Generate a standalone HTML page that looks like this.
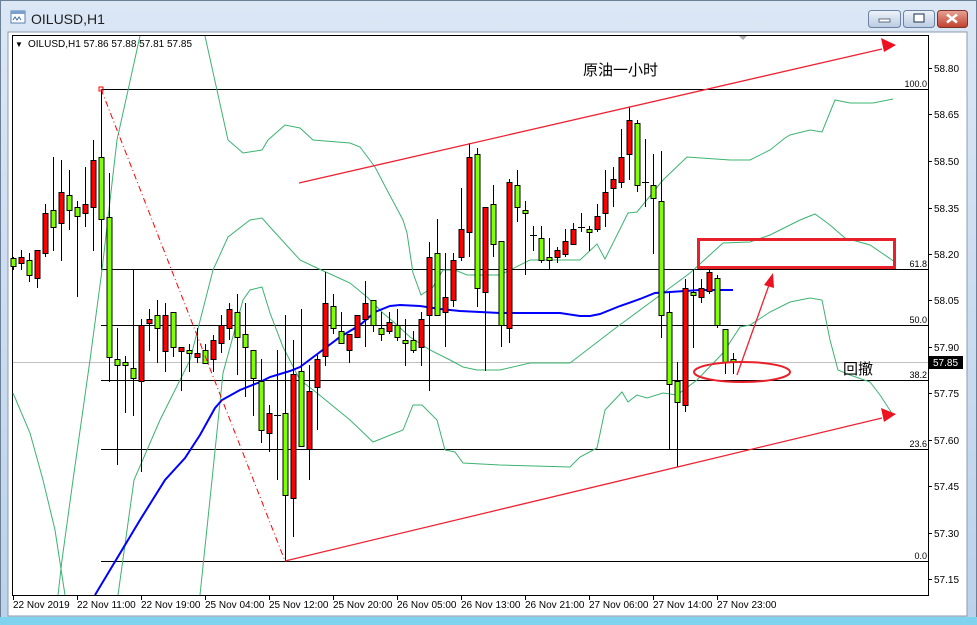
<!DOCTYPE html>
<html><head><meta charset="utf-8">
<style>
html,body{margin:0;padding:0;width:977px;height:625px;overflow:hidden;background:#c4d8ee;}
svg{display:block;font-family:"Liberation Sans","Noto Sans CJK SC",sans-serif;}
</style></head><body>
<svg width="977" height="625" viewBox="0 0 977 625" xmlns="http://www.w3.org/2000/svg">
<defs>
<linearGradient id="tb" x1="0" y1="0" x2="0" y2="1"><stop offset="0" stop-color="#dbe7f5"/><stop offset="1" stop-color="#bcd2ea"/></linearGradient>
<linearGradient id="bt" x1="0" y1="0" x2="0" y2="1"><stop offset="0" stop-color="#eef3fa"/><stop offset="1" stop-color="#b9cbe2"/></linearGradient>
<linearGradient id="cl" x1="0" y1="0" x2="0" y2="1"><stop offset="0" stop-color="#e8a395"/><stop offset="1" stop-color="#c0402c"/></linearGradient>
</defs>
<rect x="0" y="0" width="977" height="625" fill="url(#tb)"/>
<rect x="0.5" y="0.5" width="976" height="624" fill="none" stroke="#6b7f96"/>
<rect x="0" y="617" width="977" height="8" fill="#7fd3ee"/>
<!-- title -->
<rect x="11" y="11" width="14" height="12" fill="#fff" stroke="#5a7fb0"/>
<rect x="11" y="11" width="14" height="3" fill="#7aa0d0"/>
<path d="M13 20 l2-3 2 3 2-3 2 3" stroke="#3a6ab0" fill="none"/>
<text x="31" y="24" font-size="14" fill="#1e1e1e">OILUSD,H1</text>
<!-- buttons -->
<rect x="868.5" y="10.5" width="32" height="17" rx="3" fill="url(#bt)" stroke="#6b82a3"/>
<rect x="879" y="19" width="11" height="3" fill="#fff" stroke="#3f4f66" stroke-width="0.8"/>
<rect x="903.5" y="10.5" width="31" height="17" rx="3" fill="url(#bt)" stroke="#6b82a3"/>
<rect x="914" y="14" width="10" height="8" fill="#fff" stroke="#3f4f66" stroke-width="1.2"/>
<rect x="937.5" y="10.5" width="30" height="17" rx="3" fill="url(#cl)" stroke="#7a3328"/>
<path d="M947 14.5 l10 8 M957 14.5 l-10 8" stroke="#fff" stroke-width="2.5"/>
<!-- client -->
<rect x="8" y="32" width="959" height="584" fill="#fff" stroke="#8b9bb0"/>
<rect x="12.5" y="35.5" width="916" height="560" fill="#fff" stroke="#000"/>
<text x="15" y="47" font-size="8" fill="#000">▼</text>
<text x="28" y="47" font-size="10" fill="#000">OILUSD,H1  57.86 57.88 57.81 57.85</text>
<path d="M739 36 h8 l-4 4z" fill="#aaa"/>
<!-- current price line -->
<line x1="13" y1="362.5" x2="928" y2="362.5" stroke="#c0c0c0"/>
<!-- fib -->
<g stroke="#000" stroke-width="1">
<line x1="101" y1="89.5" x2="928" y2="89.5"/>
<line x1="101" y1="269.5" x2="928" y2="269.5"/>
<line x1="101" y1="325.5" x2="928" y2="325.5"/>
<line x1="101" y1="380.5" x2="928" y2="380.5"/>
<line x1="101" y1="449.5" x2="928" y2="449.5"/>
<line x1="101" y1="561.5" x2="928" y2="561.5"/>
<line x1="101.5" y1="89" x2="101.5" y2="269"/>
</g>
<g font-size="9" fill="#000" text-anchor="end">
<text x="927" y="87">100.0</text><text x="927" y="267">61.8</text><text x="927" y="323">50.0</text>
<text x="927" y="378">38.2</text><text x="927" y="447">23.6</text><text x="927" y="559">0.0</text>
</g>
<!-- bands -->
<g fill="none" stroke="#3cb371" stroke-width="1">
<polyline points="140,36 117,140 102,270 90,360 73,480 62,560 58,595"/>
<polyline points="205,36 228,140 243,153 262,150 268,140 285,125 300,128 313,140 350,143 360,147 375,167 387,190 403,220 407,233 413,273 421,295 433,287 443,270 455,270 467,275 500,275 530,260 580,260 597,244 605,259 628,213 637,212 663,180 687,157 730,160 750,160 770,150 785,138 790,135 810,130 822,132 835,100 850,103 873,103 893,99"/>
<polyline points="118,595 134,480 160,420 190,360 213,270 228,237 250,220 262,218 270,227 300,260 317,268 350,283 367,297 383,313 397,325 410,337 430,350 450,360 463,367 477,370 500,370 530,363 570,363 600,340 617,327 663,293 690,273 723,243 750,242 770,235 800,220 815,214 830,225 845,238 870,245 895,262"/>
<polyline points="13,393 30,433 43,480 55,530 65,595"/>
<polyline points="200,595 212,480 223,373 243,300 250,290 262,287 270,313 283,347 300,380 317,393 350,420 373,442 403,430 413,405 422,405 437,420 445,450 455,452 463,463 500,465 570,467 580,457 597,448 605,410 622,392 628,402 637,395 647,398 663,393 677,395 697,380 723,353 740,327 750,325 770,312 790,302 810,298 822,300 830,340 838,370 850,375 870,382 880,395 893,415"/>
</g>
<!-- MA -->
<polyline fill="none" stroke="#0000ff" stroke-width="2" points="95,595 110,570 140,520 165,480 185,458 200,435 215,408 222,400 240,390 260,382 270,377 290,371 300,367 320,352 340,337 360,325 375,312 390,306 400,305 420,306 440,309 460,311 500,313 540,313 560,313 580,316 590,316 600,314 620,306 640,299 655,293 670,292 700,290 733,290"/>
<!-- wicks -->
<path stroke="#000" stroke-width="1" fill="none" d="M13.5 257V270M21.5 250V270M29.5 253V282M37.5 250V288M45.5 204V257M53.5 157V251M61.5 160V261M69.5 170V230M77.5 201V297M85.5 167V227M93.5 140V251M101.5 150V230M109.5 173V382M117.5 328V465M125.5 356V413M133.5 269V416M141.5 319V472M149.5 309V351M157.5 300V363M165.5 303V372M173.5 312V357M181.5 347V391M189.5 344V372M197.5 328V363M205.5 344V363M213.5 335V372M221.5 315V353M229.5 303V340M237.5 294V375M245.5 303V397M253.5 350V416M261.5 359V443M269.5 405V452M277.5 350V480M285.5 315V561M293.5 340V537M301.5 309V446M309.5 365V480M317.5 355V430M325.5 272V366M333.5 294V334M341.5 312V343M349.5 334V363M357.5 315V337M365.5 281V347M373.5 300V332M381.5 312V341M389.5 312V334M397.5 309V341M405.5 319V366M413.5 331V353M421.5 312V366M429.5 242V391M437.5 219V315M445.5 253V347M453.5 253V307M461.5 188V261M469.5 143V257M477.5 148V307M485.5 207V371M493.5 185V257M501.5 241V347M509.5 179V343M517.5 170V222M525.5 201V275M533.5 226V251M541.5 226V263M549.5 238V269M557.5 247V263M565.5 229V257M573.5 223V244M581.5 213V232M589.5 226V251M597.5 204V232M605.5 170V227M613.5 167V207M621.5 129V188M629.5 107V180M637.5 120V192M645.5 139V207M653.5 154V254M661.5 151V338M669.5 292V449M677.5 362V467M685.5 279V412M693.5 269V348M701.5 279V303M709.5 269V294M717.5 275V328M725.5 329V374M733.5 353V374
M274 415.5h7M530 235.5h7M578 227.5h7M642 182.5h7"/>
<!-- bodies -->
<g stroke="#000" stroke-width="1">
<g fill="#7fff00">
<rect x="11" y="258.5" width="5" height="8"/><rect x="27" y="260.5" width="5" height="15"/><rect x="51" y="210.5" width="5" height="17"/><rect x="67" y="195.5" width="5" height="15"/><rect x="75" y="207.5" width="5" height="9"/><rect x="99" y="157.5" width="5" height="62"/><rect x="107" y="217.5" width="5" height="140"/><rect x="115" y="359.5" width="5" height="6"/><rect x="123" y="362.5" width="5" height="3"/><rect x="131" y="368.5" width="5" height="10"/><rect x="155" y="315.5" width="5" height="13"/><rect x="171" y="312.5" width="5" height="35"/><rect x="187" y="350.5" width="5" height="3"/><rect x="203" y="350.5" width="5" height="13"/><rect x="235" y="312.5" width="5" height="25"/><rect x="243" y="334.5" width="5" height="13"/><rect x="251" y="350.5" width="5" height="28"/><rect x="259" y="381.5" width="5" height="49"/><rect x="283" y="413.5" width="5" height="82"/><rect x="299" y="371.5" width="5" height="75"/><rect x="331" y="306.5" width="5" height="22"/><rect x="339" y="331.5" width="5" height="12"/><rect x="371" y="300.5" width="5" height="25"/><rect x="379" y="328.5" width="5" height="6"/><rect x="395" y="325.5" width="5" height="12"/><rect x="403" y="340.5" width="5" height="3"/><rect x="411" y="340.5" width="5" height="10"/><rect x="435" y="253.5" width="5" height="62"/><rect x="475" y="154.5" width="5" height="134"/><rect x="491" y="204.5" width="5" height="40"/><rect x="499" y="241.5" width="5" height="84"/><rect x="515" y="185.5" width="5" height="22"/><rect x="523" y="210.5" width="5" height="3"/><rect x="539" y="238.5" width="5" height="22"/><rect x="547" y="257.5" width="5" height="3"/><rect x="587" y="229.5" width="5" height="3"/><rect x="635" y="123.5" width="5" height="62"/><rect x="651" y="185.5" width="5" height="13"/><rect x="659" y="201.5" width="5" height="114"/><rect x="667" y="312.5" width="5" height="72"/><rect x="675" y="381.5" width="5" height="21"/><rect x="691" y="292.5" width="5" height="3"/><rect x="715" y="278.5" width="5" height="47"/><rect x="723" y="329.5" width="5" height="33"/><rect x="731" y="359.5" width="5" height="3"/>
</g>
<g fill="#ff0000">
<rect x="19" y="257.5" width="5" height="6"/><rect x="35" y="250.5" width="5" height="28"/><rect x="43" y="213.5" width="5" height="40"/><rect x="59" y="192.5" width="5" height="31"/><rect x="83" y="204.5" width="5" height="9"/><rect x="91" y="160.5" width="5" height="47"/><rect x="139" y="325.5" width="5" height="56"/><rect x="147" y="319.5" width="5" height="4"/><rect x="163" y="315.5" width="5" height="36"/><rect x="179" y="347.5" width="5" height="4"/><rect x="195" y="353.5" width="5" height="4"/><rect x="211" y="340.5" width="5" height="19"/><rect x="219" y="325.5" width="5" height="18"/><rect x="227" y="309.5" width="5" height="19"/><rect x="267" y="413.5" width="5" height="20"/><rect x="291" y="374.5" width="5" height="124"/><rect x="307" y="391.5" width="5" height="58"/><rect x="315" y="359.5" width="5" height="28"/><rect x="323" y="303.5" width="5" height="53"/><rect x="347" y="334.5" width="5" height="16"/><rect x="355" y="315.5" width="5" height="22"/><rect x="363" y="303.5" width="5" height="16"/><rect x="387" y="322.5" width="5" height="9"/><rect x="419" y="319.5" width="5" height="28"/><rect x="427" y="257.5" width="5" height="58"/><rect x="443" y="297.5" width="5" height="15"/><rect x="451" y="260.5" width="5" height="40"/><rect x="459" y="229.5" width="5" height="28"/><rect x="467" y="157.5" width="5" height="75"/><rect x="483" y="207.5" width="5" height="85"/><rect x="507" y="182.5" width="5" height="146"/><rect x="555" y="250.5" width="5" height="7"/><rect x="563" y="241.5" width="5" height="13"/><rect x="571" y="229.5" width="5" height="15"/><rect x="595" y="216.5" width="5" height="13"/><rect x="603" y="192.5" width="5" height="21"/><rect x="611" y="179.5" width="5" height="9"/><rect x="619" y="157.5" width="5" height="25"/><rect x="627" y="120.5" width="5" height="34"/><rect x="683" y="288.5" width="5" height="117"/><rect x="699" y="288.5" width="5" height="9"/><rect x="707" y="272.5" width="5" height="19"/>
</g>
</g>
<!-- red drawings -->
<line x1="101" y1="89" x2="285" y2="561" stroke="#ff0000" stroke-width="1" stroke-dasharray="6,3,1,3"/>
<rect x="99" y="87" width="4" height="4" fill="none" stroke="#ff0000"/>
<g stroke="#ee2233" stroke-width="1.3">
<line x1="299" y1="183" x2="882" y2="49"/>
<line x1="285" y1="561" x2="882" y2="418"/>
<line x1="737" y1="375" x2="769" y2="285"/>
</g>
<path d="M896 45 l-15 -7 l3 14z" fill="#ee1122"/>
<path d="M896 414 l-15 -6 l3 14z" fill="#ee1122"/>
<path d="M773 273 l-9 12 l10 3z" fill="#ee1122"/>
<rect x="698.5" y="239.5" width="196" height="28" fill="none" stroke="#e8202a" stroke-width="3"/>
<ellipse cx="742" cy="372" rx="48" ry="10" fill="none" stroke="#e8202a" stroke-width="2"/>
<text x="583" y="75" font-size="15" fill="#000">原油一小时</text>
<text x="843" y="374" font-size="15" fill="#000">回撤</text>
<!-- right axis -->
<g stroke="#000"><line x1="928" y1="68.5" x2="932" y2="68.5"/><line x1="928" y1="114.5" x2="932" y2="114.5"/><line x1="928" y1="161.5" x2="932" y2="161.5"/><line x1="928" y1="208.5" x2="932" y2="208.5"/><line x1="928" y1="254.5" x2="932" y2="254.5"/><line x1="928" y1="300.5" x2="932" y2="300.5"/><line x1="928" y1="347.5" x2="932" y2="347.5"/><line x1="928" y1="393.5" x2="932" y2="393.5"/><line x1="928" y1="440.5" x2="932" y2="440.5"/><line x1="928" y1="486.5" x2="932" y2="486.5"/><line x1="928" y1="533.5" x2="932" y2="533.5"/><line x1="928" y1="579.5" x2="932" y2="579.5"/></g>
<g font-size="10" fill="#000">
<text x="934" y="72">58.80</text><text x="934" y="118">58.65</text><text x="934" y="165">58.50</text><text x="934" y="212">58.35</text><text x="934" y="258">58.20</text><text x="934" y="304">58.05</text><text x="934" y="351">57.90</text><text x="934" y="397">57.75</text><text x="934" y="444">57.60</text><text x="934" y="490">57.45</text><text x="934" y="537">57.30</text><text x="934" y="583">57.15</text>
</g>
<rect x="929" y="356" width="34" height="13" fill="#000"/>
<text x="933" y="366" font-size="10" fill="#fff">57.85</text>
<!-- bottom axis -->
<g stroke="#000"><line x1="13.5" y1="595" x2="13.5" y2="600"/><line x1="77.5" y1="595" x2="77.5" y2="600"/><line x1="141.5" y1="595" x2="141.5" y2="600"/><line x1="205.5" y1="595" x2="205.5" y2="600"/><line x1="269.5" y1="595" x2="269.5" y2="600"/><line x1="333.5" y1="595" x2="333.5" y2="600"/><line x1="397.5" y1="595" x2="397.5" y2="600"/><line x1="461.5" y1="595" x2="461.5" y2="600"/><line x1="525.5" y1="595" x2="525.5" y2="600"/><line x1="589.5" y1="595" x2="589.5" y2="600"/><line x1="653.5" y1="595" x2="653.5" y2="600"/><line x1="717.5" y1="595" x2="717.5" y2="600"/></g>
<g font-size="10" fill="#000">
<text x="13" y="608">22 Nov 2019</text><text x="77" y="608">22 Nov 11:00</text><text x="141" y="608">22 Nov 19:00</text><text x="205" y="608">25 Nov 04:00</text><text x="269" y="608">25 Nov 12:00</text><text x="333" y="608">25 Nov 20:00</text><text x="397" y="608">26 Nov 05:00</text><text x="461" y="608">26 Nov 13:00</text><text x="525" y="608">26 Nov 21:00</text><text x="589" y="608">27 Nov 06:00</text><text x="653" y="608">27 Nov 14:00</text><text x="717" y="608">27 Nov 23:00</text>
</g>
</svg>
</body></html>
